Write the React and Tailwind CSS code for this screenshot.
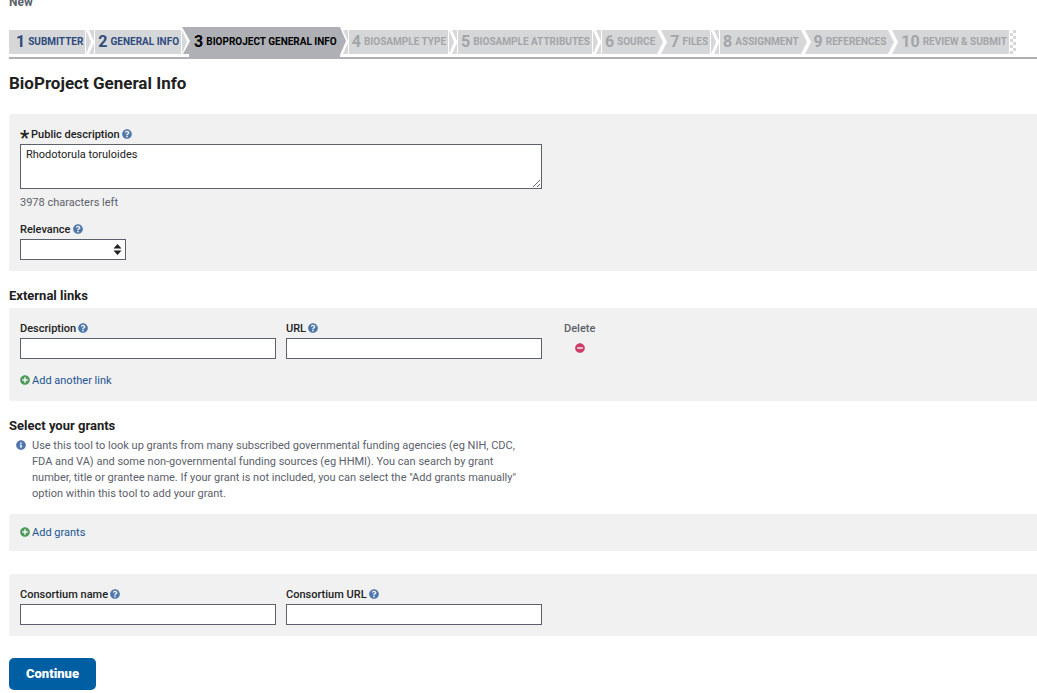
import { FaQuestionCircle, FaPlusCircle, FaMinusCircle, FaInfoCircle } from 'react-icons/fa';

const steps = [
  { label: 'Submitter', state: 'done' },
  { label: 'General info', state: 'done' },
  { label: 'BioProject general info', state: 'active' },
  { label: 'BioSample type', state: 'todo' },
  { label: 'BioSample attributes', state: 'todo' },
  { label: 'Source', state: 'todo', joined: true },
  { label: 'Files', state: 'todo' },
  { label: 'Assignment', state: 'todo', joined: true },
  { label: 'References', state: 'todo', joined: true },
  { label: 'Review & submit', state: 'todo' },
];

const stepStyles = {
  done: 'h-6 bg-[#d6d7d9] text-[#2f4b7d]',
  active: 'h-[30px] bg-[#aeb0b5] text-black',
  todo: 'h-6 bg-[#d6d7d9] text-[#a3a5a9]',
};

const LIGHT = '#d6d7d9';
const DARK = '#aeb0b5';

// Arrow between two steps, with the colours of its neighbours.
// A joined arrow has no hairline between itself and the steps.
function Arrow({ from, to, joined }) {
  return (
    <svg className="h-[30px] w-[10px] shrink-0" viewBox="0 0 10 30" aria-hidden="true">
      {from === 'active' ? (
        <path d="M0 0H1L7 14L1 28V30H0Z" fill={DARK} />
      ) : (
        <path d={joined ? 'M0 3L6 15L0 27Z' : 'M1 3L6 15L1 27Z'} fill={LIGHT} />
      )}
      {to === 'active' ? (
        <path d="M1 0L9 14L2 27H8V30H10V0Z" fill={DARK} />
      ) : (
        <path d={joined ? 'M4 3L10 15L4 27H10V3Z' : 'M4 3L9 14V3Z M9 16L4 27H9Z'} fill={LIGHT} />
      )}
    </svg>
  );
}

function Checkers() {
  const cells = [];
  for (let row = 0; row < 8; row++) {
    for (let col = (row + 1) % 2; col < 2; col += 2) {
      cells.push(<rect key={`${row}-${col}`} x={col * 3 + 1} y={row * 3 + 3} width="3" height="3" />);
    }
  }
  return (
    <svg className="h-[30px] w-2 shrink-0" viewBox="0 0 8 30" fill={LIGHT} aria-hidden="true">
      {cells}
    </svg>
  );
}

function Help({ about }) {
  return (
    <button type="button" aria-label={`Help: ${about}`} className="mb-0.5 text-[#4f77ab]">
      <FaQuestionCircle className="size-[10px]" />
    </button>
  );
}

function Label({ htmlFor, text, required }) {
  return (
    <div className="flex h-4 items-center gap-[2px]">
      <label htmlFor={htmlFor} className="flex h-4 items-center text-[11px] font-medium text-[#212121]">
        {required && <span className="mr-[2px] pt-[6px] text-xl font-bold leading-none">*</span>}
        {text}
      </label>
      <Help about={text} />
    </div>
  );
}

function Field({ id, label }) {
  return (
    <div className="w-64">
      <Label htmlFor={id} text={label} />
      <input
        id={id}
        type="text"
        className="mt-px block h-[21px] w-full border border-[#5b616b] bg-white px-1 text-[11px]"
      />
    </div>
  );
}

function AddLink({ children }) {
  return (
    <a href="#" className="inline-flex items-center gap-[2px] text-[11px] leading-4 text-[#205493]">
      <FaPlusCircle className="mb-0.5 size-[10px] text-[#4d9a5c]" />
      {children}
    </a>
  );
}

function Panel({ className, children }) {
  return <div className={`rounded-l-[3px] bg-[#f1f1f1] px-[11px] ${className}`}>{children}</div>;
}

function App() {
  return (
    <div className="overflow-hidden bg-white pl-[9px] font-['Roboto',sans-serif] text-[11px] leading-4 text-[#5b616b]">
      <div className="-mt-[6px] h-[33px] text-xs font-bold">New</div>

      {/* Wizard steps */}
      <ol className="flex items-center border-b-2 border-[#aeb0b5]">
        {steps.map((step, i) => (
          <li key={step.label} className="flex shrink-0 items-center">
            <div
              className={`flex items-center gap-[3px] whitespace-nowrap pr-[2px] ${i === 0 ? 'pl-[7px]' : 'pl-[3px]'} ${stepStyles[step.state]}`}
            >
              <span className="text-base font-bold leading-none">{i + 1}</span>
              <span className="text-[10px] font-bold uppercase leading-none">{step.label}</span>
            </div>
            {i < steps.length - 1 ? (
              <Arrow from={step.state} to={steps[i + 1].state} joined={step.joined} />
            ) : (
              <Checkers />
            )}
          </li>
        ))}
      </ol>

      <form>
        <h1 className="mt-3 text-[17px] font-bold leading-6 text-[#212121]">BioProject General Info</h1>

        <Panel className="mt-[19px] pb-[11px] pt-[13px]">
          <Label htmlFor="description" text="Public description" required />
          <textarea
            id="description"
            defaultValue="Rhodotorula toruloides"
            className="mt-px block h-[45px] w-[522px] resize border border-[#5b616b] bg-white px-[5px] py-[2px] text-[11px] leading-4 text-[#212121]"
          />
          <p className="mt-[6px]">3978 characters left</p>
          <div className="mt-[11px]">
            <Label htmlFor="relevance" text="Relevance" />
            <div className="mt-px grid w-[106px] items-center">
              <select
                id="relevance"
                className="col-start-1 row-start-1 h-[21px] w-full appearance-none border border-[#5b616b] bg-white px-1"
              >
                <option value=""></option>
              </select>
              <svg
                className="pointer-events-none col-start-1 row-start-1 mr-1 h-[11px] w-[9px] justify-self-end fill-[#212121]"
                viewBox="0 0 9 11"
                aria-hidden="true"
              >
                <path d="M4.5 0L8.5 4.5H0.5Z M4.5 11L8.5 6.5H0.5Z" />
              </svg>
            </div>
          </div>
        </Panel>

        <h2 className="mt-[15px] text-[13px] font-bold leading-5 text-[#212121]">External links</h2>
        <Panel className="mt-[2px] pb-3 pt-[13px]">
          <div className="flex gap-[10px]">
            <Field id="link-description" label="Description" />
            <Field id="link-url" label="URL" />
            <div className="ml-3 flex flex-col items-center">
              <span className="font-medium">Delete</span>
              <button type="button" aria-label="Delete link" className="mt-[6px] text-[#cd3d68]">
                <FaMinusCircle className="size-[10px]" />
              </button>
            </div>
          </div>
          <div className="mt-[14px] flex">
            <AddLink>Add another link</AddLink>
          </div>
        </Panel>

        <h2 className="mt-[15px] text-[13px] font-bold leading-5 text-[#212121]">Select your grants</h2>
        <div className="ml-[7px] mt-[2px] flex gap-[6px]">
          <FaInfoCircle className="mt-[2px] size-[10px] shrink-0 text-[#4f77ab]" />
          <p className="max-w-[490px]">
            Use this tool to look up grants from many subscribed governmental funding agencies (eg NIH, CDC, FDA and
            VA) and some non-governmental funding sources (eg HHMI). You can search by grant number, title or grantee
            name. If your grant is not included, you can select the "Add grants manually" option within this tool to
            add your grant.
          </p>
        </div>
        <Panel className="mt-3 flex pb-[10px] pt-[11px]">
          <AddLink>Add grants</AddLink>
        </Panel>

        <Panel className="mt-[23px] flex gap-[10px] pb-[11px] pt-[13px]">
          <Field id="consortium-name" label="Consortium name" />
          <Field id="consortium-url" label="Consortium URL" />
        </Panel>

        <button
          type="submit"
          className="mt-[22px] h-8 rounded-[5px] bg-[#005ea2] px-[17px] text-[13px] font-black text-white"
        >
          Continue
        </button>
      </form>
    </div>
  );
}

export default App;
